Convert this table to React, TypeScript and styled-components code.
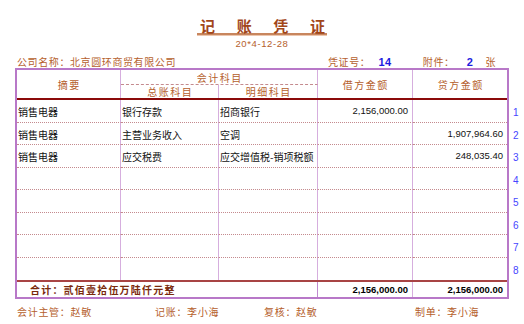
import React from "react";
import styled, { createGlobalStyle } from "styled-components";

const GlobalStyle = createGlobalStyle`
  html, body { margin: 0; padding: 0; background: #ffffff; }
  body { font-family: "Noto Sans CJK SC", "Noto Sans", sans-serif; }
`;

const BROWN = "#b5602c";
const CJK = `"Noto Sans CJK SC", "Noto Sans", sans-serif`;
const LATIN = `"Liberation Sans", Arial, sans-serif`;
const VLINE = "#d6aede";
const HLINE = "#c48a8e";

const Page = styled.div`
  width: 524px;
  height: 324px;
  box-sizing: border-box;
  padding: 19px 0 0 15px;
  overflow: hidden;
`;

const TitleRow = styled.div`
  width: 494px;
  display: flex;
  justify-content: center;
`;

const TitleBox = styled.h1`
  margin: 0;
  width: 130px;
  box-sizing: border-box;
  padding: 0 2px 0 3px;
  display: flex;
  justify-content: space-between;
  font-family: ${CJK};
  font-size: 15px;
  line-height: 14px;
  font-weight: 700;
  color: #a2461a;
  border-bottom: 2px solid #c8865e;
  box-shadow: 0 1px 0 #ecc6ae;
`;

const DateLine = styled.div`
  width: 494px;
  margin-top: 4px;
  text-align: center;
  font-family: ${LATIN};
  font-size: 9.5px;
  letter-spacing: 0.6px;
  line-height: 10px;
  color: ${BROWN};
`;

const InfoRow = styled.div`
  margin-top: 6px;
  height: 13px;
  display: flex;
  align-items: center;
  padding-left: 2px;
  font-family: ${CJK};
  font-size: 10px;
  letter-spacing: 0.6px;
  color: ${BROWN};
`;

const Company = styled.span`
  width: 311px;
  white-space: nowrap;
`;

const InfoLabel = styled.span<{ $ml?: number }>`
  margin-left: ${(p) => p.$ml ?? 0}px;
  white-space: nowrap;
`;

const InfoValue = styled.span<{ $ml: number }>`
  margin-left: ${(p) => p.$ml}px;
  font-family: ${LATIN};
  font-weight: 700;
  font-size: 11px;
  color: #1c1ce0;
`;

const VoucherRow = styled.div`
  display: flex;
  align-items: flex-start;
`;

const Voucher = styled.div`
  width: 494px;
  box-sizing: border-box;
  border: 2px solid #b878c8;
`;

const COLS = "104px 98px 99px 95px 94px";

const HeaderGrid = styled.div`
  display: grid;
  grid-template-columns: ${COLS};
  grid-template-rows: 15px 13px;
  border-bottom: 2px solid #8b0a0a;
`;

const HeadCell = styled.div<{ $col: string; $row: string; $sep?: boolean; $under?: boolean }>`
  grid-column: ${(p) => p.$col};
  grid-row: ${(p) => p.$row};
  box-sizing: border-box;
  display: flex;
  align-items: center;
  justify-content: center;
  padding-left: 1.5px;
  font-family: ${CJK};
  font-size: 10px;
  letter-spacing: 1.5px;
  color: ${BROWN};
  border-right: ${(p) => (p.$sep ? `1px solid ${VLINE}` : "none")};
  border-bottom: ${(p) => (p.$under ? `1px dashed ${HLINE}` : "none")};
`;

const BodyGrid = styled.div`
  display: grid;
  grid-template-columns: ${COLS};
  grid-auto-rows: 22.5px;
`;

const Cell = styled.div<{ $amount?: boolean; $sep?: boolean; $last?: boolean }>`
  box-sizing: border-box;
  display: flex;
  align-items: center;
  justify-content: ${(p) => (p.$amount ? "flex-end" : "flex-start")};
  padding: ${(p) => (p.$amount ? "0 4px 0 0" : "2px 0 0 1px")};
  font-family: ${(p) => (p.$amount ? LATIN : CJK)};
  font-size: ${(p) => (p.$amount ? "9.5px" : "10px")};
  color: #111;
  white-space: nowrap;
  overflow: hidden;
  border-right: ${(p) => (p.$sep ? `1px solid ${VLINE}` : "none")};
  border-bottom: ${(p) => (p.$last ? "none" : `1px dotted ${HLINE}`)};
`;

const TotalGrid = styled.div`
  display: grid;
  grid-template-columns: ${COLS};
  height: 17px;
  box-sizing: border-box;
  border-top: 2px solid #a84444;
`;

const TotalLabel = styled.div`
  grid-column: 1 / 4;
  box-sizing: border-box;
  padding-left: 13px;
  display: flex;
  align-items: center;
  font-family: ${CJK};
  font-weight: 700;
  font-size: 10px;
  letter-spacing: 1.2px;
  color: #7a2a0c;
  border-right: 1px solid #c08ad0;
`;

const TotalAmount = styled.div<{ $sep?: boolean }>`
  box-sizing: border-box;
  display: flex;
  align-items: center;
  justify-content: flex-end;
  padding-right: 4px;
  font-family: ${LATIN};
  font-weight: 700;
  font-size: 9.5px;
  color: #000;
  border-right: ${(p) => (p.$sep ? `1px solid ${VLINE}` : "none")};
`;

const RowNumbers = styled.div`
  padding-top: 32px;
  display: grid;
  grid-auto-rows: 22.5px;
`;

const RowNumber = styled.div`
  padding: 3px 0 0 4px;
  display: flex;
  align-items: center;
  font-family: ${LATIN};
  font-size: 10px;
  color: #4646ff;
`;

const Footer = styled.div`
  margin-top: 7px;
  padding-left: 2px;
  display: grid;
  grid-template-columns: 138px 109px 151px auto;
  font-family: ${CJK};
  font-size: 10px;
  line-height: 12px;
  letter-spacing: 0.7px;
  color: ${BROWN};
`;

type Entry = {
  summary: string;
  account: string;
  detail: string;
  debit: string;
  credit: string;
};

const entries: Entry[] = [
  { summary: "销售电器", account: "银行存款", detail: "招商银行", debit: "2,156,000.00", credit: "" },
  { summary: "销售电器", account: "主营业务收入", detail: "空调", debit: "", credit: "1,907,964.60" },
  { summary: "销售电器", account: "应交税费", detail: "应交增值税-销项税额", debit: "", credit: "248,035.40" },
];

const ROWS = 8;

export default function App() {
  const rows: Entry[] = Array.from({ length: ROWS }, (_, i) =>
    entries[i] ?? { summary: "", account: "", detail: "", debit: "", credit: "" }
  );

  return (
    <>
      <GlobalStyle />
      <Page>
        <TitleRow>
          <TitleBox>
            <span>记</span>
            <span>账</span>
            <span>凭</span>
            <span>证</span>
          </TitleBox>
        </TitleRow>
        <DateLine>20*4-12-28</DateLine>
        <InfoRow>
          <Company>公司名称：北京圆环商贸有限公司</Company>
          <InfoLabel>凭证号：</InfoLabel>
          <InfoValue $ml={8}>14</InfoValue>
          <InfoLabel $ml={31}>附件：</InfoLabel>
          <InfoValue $ml={12}>2</InfoValue>
          <InfoLabel $ml={12}>张</InfoLabel>
        </InfoRow>

        <VoucherRow>
          <Voucher>
            <HeaderGrid>
              <HeadCell $col="1" $row="1 / 3" $sep>摘要</HeadCell>
              <HeadCell $col="2 / 4" $row="1" $sep $under>会计科目</HeadCell>
              <HeadCell $col="2" $row="2" $sep>总账科目</HeadCell>
              <HeadCell $col="3" $row="2" $sep>明细科目</HeadCell>
              <HeadCell $col="4" $row="1 / 3" $sep>借方金额</HeadCell>
              <HeadCell $col="5" $row="1 / 3">贷方金额</HeadCell>
            </HeaderGrid>
            <BodyGrid>
              {rows.map((r, i) => {
                const last = i === ROWS - 1;
                return (
                  <React.Fragment key={i}>
                    <Cell $sep $last={last}>{r.summary}</Cell>
                    <Cell $sep $last={last}>{r.account}</Cell>
                    <Cell $sep $last={last}>{r.detail}</Cell>
                    <Cell $sep $amount $last={last}>{r.debit}</Cell>
                    <Cell $amount $last={last}>{r.credit}</Cell>
                  </React.Fragment>
                );
              })}
            </BodyGrid>
            <TotalGrid>
              <TotalLabel>合计：贰佰壹拾伍万陆仟元整</TotalLabel>
              <TotalAmount $sep>2,156,000.00</TotalAmount>
              <TotalAmount>2,156,000.00</TotalAmount>
            </TotalGrid>
          </Voucher>
          <RowNumbers>
            {Array.from({ length: ROWS }, (_, i) => (
              <RowNumber key={i}>{i + 1}</RowNumber>
            ))}
          </RowNumbers>
        </VoucherRow>

        <Footer>
          <span>会计主管：赵敏</span>
          <span>记账：李小海</span>
          <span>复核：赵敏</span>
          <span>制单：李小海</span>
        </Footer>
      </Page>
    </>
  );
}
